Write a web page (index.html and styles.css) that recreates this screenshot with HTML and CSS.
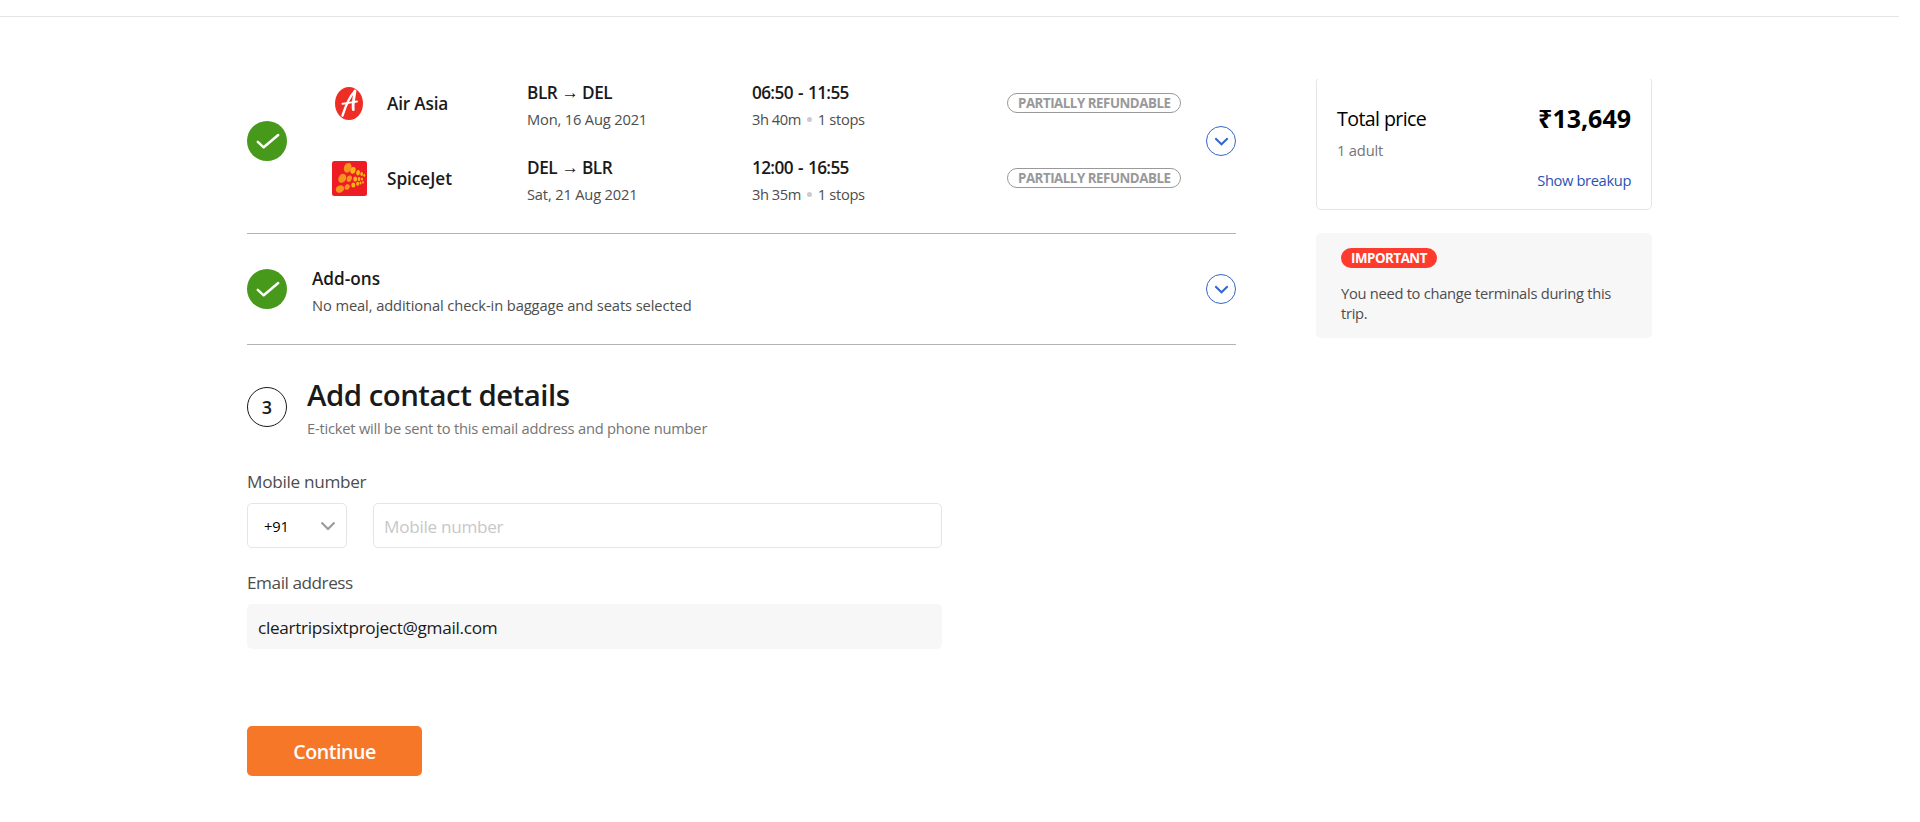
FILE: index.html
```html
<!DOCTYPE html>
<html lang="en">
<head>
<meta charset="utf-8">
<title>Add contact details</title>
<link rel="stylesheet" href="styles.css">
</head>
<body>
<header class="topbar"></header>
<main class="page">
  <div class="steps">
    <section class="step itinerary">
      <svg class="check" viewBox="0 0 40 40"><circle cx="20" cy="20" r="20"/><path d="M10.8 20.8 16.7 26.3 31.2 14"/></svg>
      <div class="flights">
        <div class="flight">
          <svg class="logo" viewBox="0 0 35 35"><ellipse cx="17" cy="17.5" rx="14" ry="16.5" fill="#ee2e24"/><g fill="none" stroke="#fff" stroke-linecap="round" stroke-linejoin="round"><path d="M10.5 29.5C12 25 17 11 22.5 5.5" stroke-width="2.4"/><path d="M23 5c-.8 6-2.600 13-1.700 18.600" stroke-width="2.800"/><path d="M10.500 17.700c5-.2 9-1.200 14.500-2.200" stroke-width="1.900"/></g></svg>
          <div class="airline air-asia">Air Asia</div>
          <div class="info"><div class="title route">BLR <span class="arrow">→</span> DEL</div><div class="sub date">Mon, 16 Aug 2021</div></div>
          <div class="info"><div class="title times">06:50 - 11:55</div><div class="sub duration"><span class="hours">3h 40m</span><i class="dot"></i><span class="stops">1 stops</span></div></div>
          <div class="pill">PARTIALLY REFUNDABLE</div>
        </div>
        <div class="flight">
          <svg class="logo" viewBox="0 0 35 35"><rect width="35" height="35" rx="2.500" fill="#ee1c25"/><g fill="#f7941d"><ellipse cx="15.700" cy="6.800" rx="3.700" ry="5" transform="rotate(20 15.700 6.800)"/><ellipse cx="10.300" cy="17.300" rx="3.700" ry="4.800" transform="rotate(30 10.300 17.300)"/><ellipse cx="8" cy="28" rx="4.300" ry="3.400" transform="rotate(-30 8 28)"/><ellipse cx="17.300" cy="17.700" rx="2.500" ry="3.300" transform="rotate(20 17.300 17.700)"/><ellipse cx="15.200" cy="26" rx="2.400" ry="3" transform="rotate(30 15.200 26)"/></g><g fill="#fdb515"><ellipse cx="21" cy="9.300" rx="2.500" ry="3.500" transform="rotate(15 21 9.300)"/><ellipse cx="26" cy="11.700" rx="1.900" ry="2.700" transform="rotate(15 26 11.700)"/><ellipse cx="29.700" cy="13" rx="1.400" ry="2"/><ellipse cx="32.300" cy="14.300" rx=".9" ry="1.600"/><ellipse cx="23.200" cy="18" rx="1.900" ry="2.500"/><ellipse cx="27" cy="18" rx="1.400" ry="2"/><ellipse cx="30" cy="18" rx="1" ry="1.600"/><ellipse cx="21.300" cy="24" rx="2" ry="2.500"/><ellipse cx="25.700" cy="22.800" rx="1.500" ry="2"/><ellipse cx="28.500" cy="22" rx="1" ry="1.600"/><ellipse cx="31" cy="21.400" rx=".8" ry="1.300"/></g></svg>
          <div class="airline spicejet">SpiceJet</div>
          <div class="info"><div class="title route">DEL <span class="arrow">→</span> BLR</div><div class="sub date">Sat, 21 Aug 2021</div></div>
          <div class="info"><div class="title times">12:00 - 16:55</div><div class="sub duration"><span class="hours">3h 35m</span><i class="dot"></i><span class="stops">1 stops</span></div></div>
          <div class="pill">PARTIALLY REFUNDABLE</div>
        </div>
      </div>
      <svg class="expand" viewBox="0 0 30 30"><circle cx="15" cy="15" r="14.500"/><path d="M9.300 12.200 15.500 18.300 21.700 12.200"/></svg>
    </section>

    <section class="step addons">
      <svg class="check" viewBox="0 0 40 40"><circle cx="20" cy="20" r="20"/><path d="M10.800 20.800 16.700 26.300 31.200 14"/></svg>
      <div class="addons-text">
        <div class="title">Add-ons</div>
        <div class="sub addons-sub">No meal, additional check-in baggage and seats selected</div>
      </div>
      <svg class="expand" viewBox="0 0 30 30"><circle cx="15" cy="15" r="14.500"/><path d="M9.300 12.200 15.500 18.300 21.700 12.200"/></svg>
    </section>

    <section class="contact">
      <div class="contact-head">
        <div class="number">3</div>
        <div>
          <h1 class="heading">Add contact details</h1>
          <div class="sub contact-sub">E-ticket will be sent to this email address and phone number</div>
        </div>
      </div>
      <div class="label mobile-text">Mobile number</div>
      <div class="phone-row">
        <div class="code"><span>+91</span><svg class="caret" viewBox="0 0 16 10"><path d="M1.500 1.500 8 8 14.500 1.500"/></svg></div>
        <div class="field phone mobile-text">Mobile number</div>
      </div>
      <div class="label email-label">Email address</div>
      <div class="field email">cleartripsixtproject@gmail.com</div>
      <button class="continue">Continue</button>
    </section>
  </div>

  <aside class="side">
    <div class="price-clip">
      <div class="price-card">
        <div class="price-row"><span class="total">Total price</span><span class="amount">₹13,649</span></div>
        <div class="adult">1 adult</div>
        <div class="breakup">Show breakup</div>
      </div>
    </div>
    <div class="notice">
      <div class="badge">IMPORTANT</div>
      <p class="notice-text">You need to change terminals during this trip.</p>
    </div>
  </aside>
</main>
</body>
</html>
```
FILE: styles.css
```css
* { box-sizing: border-box; }
body { margin: 0; background: #fff; color: #1a1a1a; font-family: "Open Sans", "Noto Sans", sans-serif; overflow: hidden; }
svg { display: block; flex: none; }

.topbar { width: 1899px; height: 17px; border-bottom: 1px solid #e5e5e5; }
.page { display: flex; gap: 80px; padding-left: 247px; }
.steps { width: 989px; padding-top: 49px; }
.side { width: 336px; padding-top: 62px; }

.step { display: flex; align-items: center; border-bottom: 1px solid #b3b3b3; }
.itinerary { height: 168px; padding-bottom: 17px; }
.addons { height: 111px; }
.check { width: 40px; height: 40px; }
.check circle { fill: #47991c; }
.check path { fill: none; stroke: #fff; stroke-width: 2.500px; stroke-linecap: round; stroke-linejoin: round; }
.expand { width: 30px; height: 30px; margin-left: auto; }
.expand circle { fill: none; stroke: #3366cc; stroke-width: 1px; }
.expand path { fill: none; stroke: #3366cc; stroke-width: 2px; }

.flights { margin-left: 45px; }
.flight { display: grid; grid-template-columns: 55px 140px 225px 255px 174px; align-items: center; height: 75px; }
.logo { width: 35px; height: 35px; }
.airline, .title { font-size: 17.200px; font-weight: 600; line-height: 24px; white-space: nowrap; }
.air-asia { letter-spacing: -0.180px; }
.spicejet { letter-spacing: -0.030px; }
.info { padding-top: 4px; }
.route { letter-spacing: -0.450px; }
.arrow { display: inline-block; line-height: 1; transform: translateY(-1.500px); }
.times { letter-spacing: -0.640px; word-spacing: 1.300px; }
.sub { margin-top: 3px; font-size: 14.700px; line-height: 22px; color: #4d4d4d; white-space: nowrap; }
.date { letter-spacing: -0.180px; }
.duration { display: flex; align-items: center; }
.hours { letter-spacing: -0.460px; }
.stops { letter-spacing: -0.350px; }
.dot { width: 5px; height: 5px; margin: 1px 6px 0; border-radius: 50%; background: #ccc; }
.pill { height: 20px; margin-bottom: 1px; padding-left: 10px; border: 1px solid #999; border-radius: 10px; color: #999; font-size: 13.300px; font-weight: 700; line-height: 19px; letter-spacing: -0.460px; white-space: nowrap; }

.addons-text { margin-left: 25px; padding-top: 4px; }
.addons-sub { letter-spacing: -0.100px; }

.contact { padding-top: 29px; }
.contact-head { display: flex; align-items: center; gap: 20px; }
.number { width: 40px; height: 40px; border: 1px solid #1a1a1a; border-radius: 50%; font-size: 18px; font-weight: 600; line-height: 39px; text-align: center; }
.heading { margin: 0; padding-top: 1px; font-size: 29.400px; font-weight: 600; line-height: 40px; letter-spacing: -0.500px; }
.contact-sub { margin-top: 2px; padding-bottom: 1px; color: #757575; letter-spacing: -0.220px; }
.label { margin-top: 30px; font-size: 17.200px; line-height: 24px; color: #4d4d4d; }
.mobile-text { letter-spacing: -0.310px; }
.phone-row { display: flex; gap: 26px; margin-top: 9px; }
.code { display: flex; align-items: center; justify-content: space-between; width: 100px; height: 45px; padding: 0 10px 0 16px; border: 1px solid #e5e5e5; border-radius: 5px; color: #000; font-size: 14.700px; letter-spacing: -0.200px; }
.caret { width: 16px; height: 10px; }
.caret path { fill: none; stroke: #999; stroke-width: 2px; }
.field { height: 45px; border-radius: 5px; font-size: 17.200px; line-height: 45px; }
.phone { width: 569px; padding-left: 10px; border: 1px solid #e5e5e5; color: #c8c8c8; }
.email-label { margin-top: 23px; letter-spacing: -0.460px; }
.email { width: 695px; margin-top: 9px; padding-left: 11px; background: #f7f7f7; line-height: 47px; letter-spacing: -0.310px; }
.continue { display: block; width: 175px; height: 50px; margin-top: 77px; padding: 2px 0 0; border: 0; border-radius: 5px; background: #f77728; color: #fff; font: 600 19.600px/48px "Open Sans", sans-serif; letter-spacing: -0.460px; }

.price-clip { height: 131px; overflow: hidden; }
.price-card { height: 133px; margin-top: -2px; padding: 25px 20px 0; border: 1px solid #e5e5e5; border-radius: 5px; }
.price-row { display: flex; justify-content: space-between; line-height: 30px; color: #000; }
.total { padding-top: 1px; font-size: 19.600px; letter-spacing: -0.600px; }
.amount { font-size: 25px; font-weight: 700; }
.adult { margin-top: 5px; font-size: 14.700px; line-height: 22px; color: #757575; letter-spacing: -0.170px; }
.breakup { margin-top: 8px; font-size: 14.700px; line-height: 22px; color: #2a52b5; letter-spacing: -0.370px; text-align: right; }
.notice { height: 105px; margin-top: 23px; padding: 15px 25px 0; border-radius: 5px; background: #f7f7f7; }
.badge { width: 96px; height: 20px; border-radius: 10px; background: #ff3b2d; color: #fff; font-size: 13.300px; font-weight: 700; line-height: 20px; letter-spacing: -0.450px; text-align: center; }
.notice-text { margin: 15px 0 0; font-size: 14.700px; line-height: 20px; color: #4d4d4d; letter-spacing: -0.280px; }
```
